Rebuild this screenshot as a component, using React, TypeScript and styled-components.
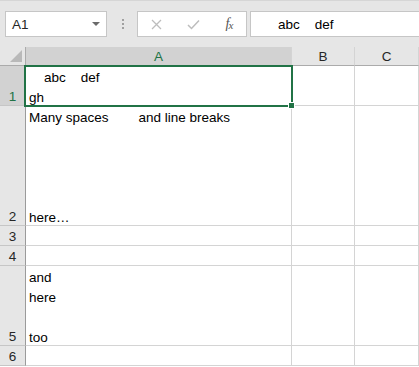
import React from 'react';
import styled, { createGlobalStyle } from 'styled-components';

const GlobalStyle = createGlobalStyle`
    html, body {
        margin: 0;
        padding: 0;
        background: #ffffff;
    }
    body {
        font-family: "Liberation Sans", Arial, sans-serif;
        overflow: hidden;
    }
`;

const Window = styled.div`
    width: 419px;
    height: 367px;
    background: #ffffff;
    overflow: hidden;
`;

const TopBar = styled.div`
    display: flex;
    align-items: center;
    height: 47px;
    padding-left: 5px;
    box-sizing: border-box;
    background: #e6e6e6;
    border-top: 1px solid #d6d6d6;
`;

const NameBox = styled.div`
    display: flex;
    align-items: center;
    justify-content: space-between;
    width: 102px;
    height: 26px;
    box-sizing: border-box;
    padding: 0 6px 0 6px;
    background: #ffffff;
    border: 1px solid #c6c6c6;
    font-size: 13.5px;
    color: #262626;
`;

const Caret = styled.span`
    width: 0;
    height: 0;
    border-left: 4px solid transparent;
    border-right: 4px solid transparent;
    border-top: 4px solid #6a6a6a;
`;

const Grip = styled.div`
    display: flex;
    flex-direction: column;
    gap: 2px;
    margin: 0 13px 0 15px;
`;

const Dot = styled.span`
    width: 2px;
    height: 2px;
    background: #a0a0a0;
`;

const ButtonBox = styled.div`
    display: flex;
    align-items: center;
    width: 110px;
    height: 26px;
    box-sizing: border-box;
    background: #ffffff;
    border: 1px solid #c6c6c6;
`;

const IconButton = styled.span<{ $w: number }>`
    display: flex;
    align-items: center;
    justify-content: center;
    width: ${(p) => p.$w}px;
    height: 100%;
`;

const Fx = styled.span`
    font-family: "Liberation Serif", "Times New Roman", serif;
    font-style: italic;
    font-size: 14px;
    color: #555555;
    letter-spacing: -1px;
`;

const FxSub = styled.span`
    font-size: 11px;
    position: relative;
    top: 1px;
`;

const FormulaBox = styled.div`
    flex: 1;
    height: 26px;
    margin-left: 3px;
    box-sizing: border-box;
    display: flex;
    align-items: center;
    padding-left: 12px;
    background: #ffffff;
    border: 1px solid #c6c6c6;
    border-right: none;
    font-size: 13.5px;
    color: #000000;
    white-space: pre;
`;

const Grid = styled.div`
    position: relative;
    display: grid;
    grid-template-columns: 26px 266px 63px 64px;
    grid-template-rows: 19px 40px 120px 20px 20px 80px 20px;
`;

const Corner = styled.div`
    position: relative;
    background: #e6e6e6;
    border-right: 1px solid #ababab;
    border-bottom: 1px solid #ababab;
    box-sizing: border-box;
`;

const CornerTriangle = styled.span`
    position: absolute;
    right: 3px;
    bottom: 3px;
    width: 0;
    height: 0;
    border-left: 12px solid transparent;
    border-bottom: 12px solid #b9b9b9;
`;

const ColHeader = styled.div<{ $selected?: boolean }>`
    display: flex;
    align-items: center;
    justify-content: center;
    box-sizing: border-box;
    background: ${(p) => (p.$selected ? '#d2d2d2' : '#e6e6e6')};
    border-right: 1px solid #d4d4d4;
    border-bottom: 1px solid #ababab;
    font-size: 13.5px;
    color: ${(p) => (p.$selected ? '#217346' : '#262626')};
`;

const RowHeader = styled.div<{ $selected?: boolean }>`
    display: flex;
    align-items: flex-end;
    justify-content: center;
    box-sizing: border-box;
    background: ${(p) => (p.$selected ? '#d2d2d2' : '#e6e6e6')};
    border-right: 1px solid #9b9b9b;
    border-bottom: 1px solid #c6c6c6;
    font-size: 13.5px;
    line-height: 20px;
    color: ${(p) => (p.$selected ? '#217346' : '#262626')};
`;

const Label = styled.span`
    margin-bottom: -2px;
`;

const Cell = styled.div`
    position: relative;
    display: flex;
    align-items: flex-end;
    box-sizing: border-box;
    padding-left: 3px;
    border-right: 1px solid #d4d4d4;
    border-bottom: 1px solid #d4d4d4;
    font-size: 13.5px;
    line-height: 20px;
    color: #000000;
    white-space: pre;
`;

const CellText = styled.div`
    margin-bottom: -3px;
`;

const Selection = styled.div`
    position: absolute;
    left: 24px;
    top: 18px;
    width: 269px;
    height: 42px;
    box-sizing: border-box;
    border: 2px solid #217346;
    pointer-events: none;
`;

const Handle = styled.span`
    position: absolute;
    right: -4px;
    bottom: -4px;
    width: 5px;
    height: 5px;
    background: #217346;
    border: 1px solid #ffffff;
`;

const rows: { n: number; a: string }[] = [
    { n: 1, a: '    abc    def\ngh' },
    { n: 2, a: 'Many spaces        and line breaks\n\n\n\n\nhere…' },
    { n: 3, a: '' },
    { n: 4, a: '' },
    { n: 5, a: 'and\nhere\n\ntoo' },
    { n: 6, a: '' },
];

export default function App() {
    return (
        <Window>
            <GlobalStyle />
            <TopBar>
                <NameBox>
                    A1
                    <Caret />
                </NameBox>
                <Grip>
                    <Dot />
                    <Dot />
                    <Dot />
                </Grip>
                <ButtonBox>
                    <IconButton $w={36}>
                        <svg width="11" height="11" viewBox="0 0 11 11">
                            <path d="M1 1L10 10M10 1L1 10" stroke="#bdbdbd" strokeWidth="1.3" fill="none" />
                        </svg>
                    </IconButton>
                    <IconButton $w={38}>
                        <svg width="13" height="11" viewBox="0 0 13 11">
                            <path d="M1 6L4.5 9.5L12 1.5" stroke="#bdbdbd" strokeWidth="1.5" fill="none" />
                        </svg>
                    </IconButton>
                    <IconButton $w={34}>
                        <Fx>
                            f<FxSub>x</FxSub>
                        </Fx>
                    </IconButton>
                </ButtonBox>
                <FormulaBox>{'    abc    def'}</FormulaBox>
            </TopBar>
            <Grid>
                <Corner>
                    <CornerTriangle />
                </Corner>
                <ColHeader $selected>A</ColHeader>
                <ColHeader>B</ColHeader>
                <ColHeader>C</ColHeader>
                {rows.map((r) => (
                    <React.Fragment key={r.n}>
                        <RowHeader $selected={r.n === 1}>
                            <Label>{r.n}</Label>
                        </RowHeader>
                        <Cell>
                            <CellText>{r.a}</CellText>
                        </Cell>
                        <Cell />
                        <Cell />
                    </React.Fragment>
                ))}
                <Selection>
                    <Handle />
                </Selection>
            </Grid>
        </Window>
    );
}
